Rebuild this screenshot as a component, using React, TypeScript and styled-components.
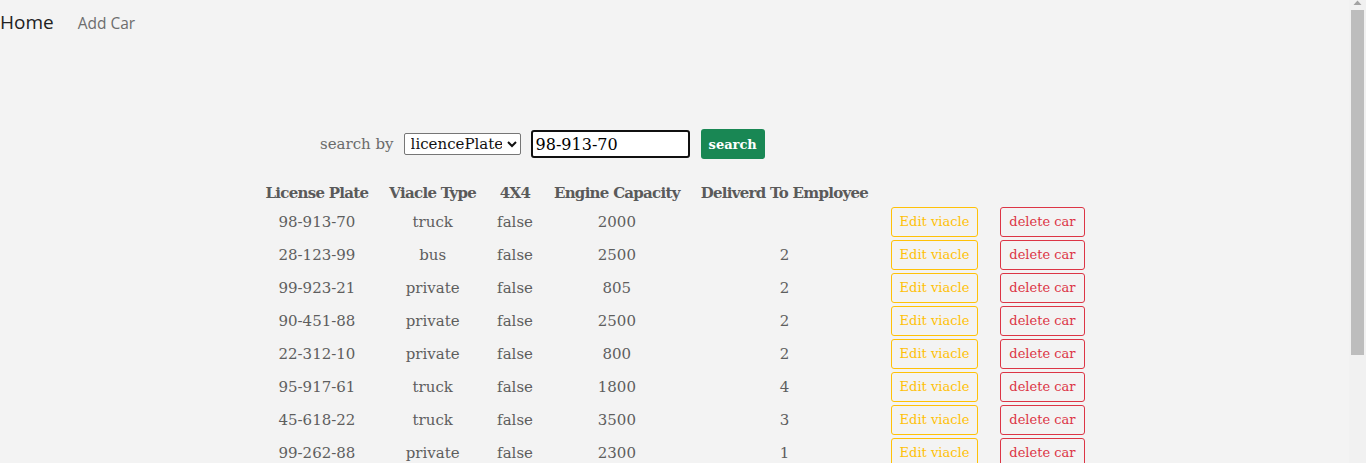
import * as React from 'react';
import styled, { createGlobalStyle } from 'styled-components';

interface Car {
    licencePlate: string;
    type: string;
    is4x4: boolean;
    engine: number;
    employee?: number;
}

const cars: Car[] = [
    { licencePlate: '98-913-70', type: 'truck', is4x4: false, engine: 2000 },
    { licencePlate: '28-123-99', type: 'bus', is4x4: false, engine: 2500, employee: 2 },
    { licencePlate: '99-923-21', type: 'private', is4x4: false, engine: 805, employee: 2 },
    { licencePlate: '90-451-88', type: 'private', is4x4: false, engine: 2500, employee: 2 },
    { licencePlate: '22-312-10', type: 'private', is4x4: false, engine: 800, employee: 2 },
    { licencePlate: '95-917-61', type: 'truck', is4x4: false, engine: 1800, employee: 4 },
    { licencePlate: '45-618-22', type: 'truck', is4x4: false, engine: 3500, employee: 3 },
    { licencePlate: '99-262-88', type: 'private', is4x4: false, engine: 2300, employee: 1 },
    { licencePlate: '12-345-67', type: 'bus', is4x4: false, engine: 3000, employee: 1 },
    { licencePlate: '33-480-15', type: 'private', is4x4: false, engine: 1600, employee: 3 },
    { licencePlate: '71-205-44', type: 'truck', is4x4: false, engine: 2800, employee: 2 },
];

const GlobalStyle = createGlobalStyle`
    html, body {
        margin: 0;
        background: #f3f3f3;
    }
    body {
        font-family: "DejaVu Serif", "Liberation Serif", serif;
        color: #5a5a5a;
    }
`;

export default function App() {
    return (
        <>
            <GlobalStyle />
            <Page>
                <Nav>
                    <NavLink $active={true}>Home</NavLink>
                    <NavLink>Add Car</NavLink>
                </Nav>
                <Main>
                    <SearchForm onSubmit={(e) => e.preventDefault()}>
                        <SearchLabel>search by</SearchLabel>
                        <Select defaultValue="licencePlate">
                            <option value="licencePlate">licencePlate</option>
                            <option value="type">type</option>
                        </Select>
                        <SearchInput defaultValue="98-913-70" />
                        <SearchButton type="submit">search</SearchButton>
                    </SearchForm>
                    <Table>
                        <thead>
                            <tr>
                                <Th>License Plate</Th>
                                <Th>Viacle Type</Th>
                                <Th>4X4</Th>
                                <Th>Engine Capacity</Th>
                                <Th>Deliverd To Employee</Th>
                                <Th $action={true} />
                                <Th $action={true} />
                            </tr>
                        </thead>
                        <tbody>
                            {cars.map((car) => (
                                <tr key={car.licencePlate}>
                                    <Td>{car.licencePlate}</Td>
                                    <Td>{car.type}</Td>
                                    <Td>{String(car.is4x4)}</Td>
                                    <Td>{car.engine}</Td>
                                    <Td>{car.employee}</Td>
                                    <Td $action={true}>
                                        <OutlineButton $variant="warning">Edit viacle</OutlineButton>
                                    </Td>
                                    <Td $action={true}>
                                        <OutlineButton $variant="danger">delete car</OutlineButton>
                                    </Td>
                                </tr>
                            ))}
                        </tbody>
                    </Table>
                </Main>
            </Page>
            <Scrollbar>
                <ScrollArrow viewBox="0 0 17 10">
                    <path d="M4.5 5 L8.5 0.5 L12.5 5 Z" fill="#a3a3a3" />
                </ScrollArrow>
                <ScrollTrack>
                    <ScrollThumb />
                </ScrollTrack>
            </Scrollbar>
        </>
    );
}

const Page = styled.div`
    margin-right: 17px;
`;

const Nav = styled.nav`
    display: flex;
    align-items: baseline;
    gap: 24px;
    height: 44px;
    padding-top: 9px;
    box-sizing: border-box;
    font-family: "Open Sans", "Noto Sans", sans-serif;
`;

const NavLink = styled.a<{ $active?: boolean }>`
    font-size: ${(p) => (p.$active ? '19px' : '15.5px')};
    color: ${(p) => (p.$active ? '#212121' : '#6d6d6d')};
    text-decoration: none;
    cursor: pointer;
`;

const Main = styled.main`
    display: flex;
    flex-direction: column;
    align-items: flex-start;
    padding: 85px 0 40px 255px;
`;

const SearchForm = styled.form`
    display: flex;
    align-items: center;
    margin-left: 65px;
    margin-bottom: 21px;
`;

const SearchLabel = styled.span`
    font-size: 15px;
    color: #6a6a6a;
    margin-right: 10px;
`;

const Select = styled.select`
    font-family: "DejaVu Serif", serif;
    font-size: 15px;
    color: #111;
    height: 22px;
    width: 117px;
    background: #fff;
    border: 1px solid #767676;
    border-radius: 2px;
    padding: 0 2px;
    margin-right: 10px;
`;

const SearchInput = styled.input`
    font-family: "DejaVu Serif", serif;
    font-size: 16px;
    color: #000;
    width: 159px;
    height: 28px;
    box-sizing: border-box;
    border: 2px solid #101010;
    border-radius: 3px;
    padding: 0 3px;
    margin-right: 11px;
    outline: none;
`;

const SearchButton = styled.button`
    font-family: "DejaVu Serif", serif;
    font-size: 13px;
    font-weight: bold;
    color: #fff;
    background: #198754;
    border: none;
    border-radius: 3px;
    height: 30px;
    padding: 0 8px;
    cursor: pointer;
`;

const Table = styled.table`
    border-collapse: separate;
    border-spacing: 0;
`;

const Th = styled.th<{ $action?: boolean }>`
    font-size: 15px;
    font-weight: bold;
    color: #5a5a5a;
    padding: ${(p) => (p.$action ? '0 10px 1px 12px' : '0 10.5px 1px')};
    height: 25px;
    white-space: nowrap;
    letter-spacing: -0.72px;
`;

const Td = styled.td<{ $action?: boolean }>`
    font-size: 15px;
    text-align: center;
    padding: ${(p) => (p.$action ? '0 10px 2px 12px' : '0 10.5px 2px')};
    height: 31px;
    white-space: nowrap;
    color: #5e5e5e;
`;

const OutlineButton = styled.button<{ $variant: 'warning' | 'danger' }>`
    font-family: "DejaVu Serif", serif;
    font-size: 13px;
    height: 30px;
    padding: 0 8px;
    background: transparent;
    border: 1px solid ${(p) => (p.$variant === 'warning' ? '#ffc107' : '#dc3545')};
    color: ${(p) => (p.$variant === 'warning' ? '#ffc107' : '#dc3545')};
    border-radius: 3px;
    cursor: pointer;
`;

const Scrollbar = styled.div`
    position: fixed;
    top: 0;
    right: 0;
    bottom: 0;
    width: 17px;
    background: #f1f1f1;
    display: flex;
    flex-direction: column;
`;

const ScrollArrow = styled.svg`
    width: 17px;
    height: 10px;
    flex: none;
`;

const ScrollTrack = styled.div`
    flex: 1;
    padding: 0 2px;
`;

const ScrollThumb = styled.div`
    height: 345px;
    background: #bdbdbd;
`;
